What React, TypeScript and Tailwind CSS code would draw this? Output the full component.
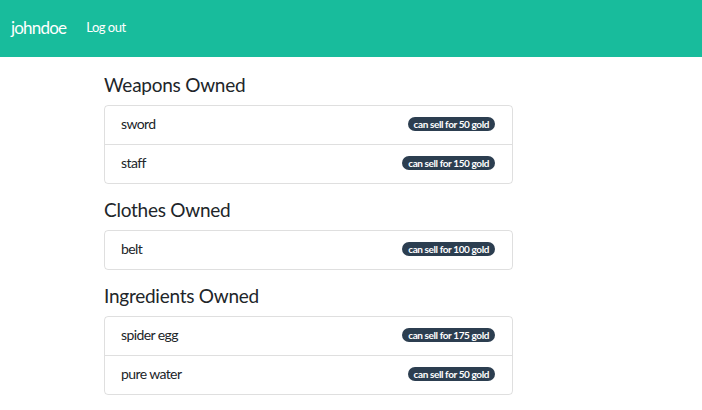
import React from 'react';

interface Item {
  name: string;
  price: number;
}

const sections: { title: string; items: Item[] }[] = [
  {
    title: 'Weapons Owned',
    items: [
      { name: 'sword', price: 50 },
      { name: 'staff', price: 150 },
    ],
  },
  {
    title: 'Clothes Owned',
    items: [{ name: 'belt', price: 100 }],
  },
  {
    title: 'Ingredients Owned',
    items: [
      { name: 'spider egg', price: 175 },
      { name: 'pure water', price: 50 },
    ],
  },
];

export default function App() {
  return (
    <div className="min-h-screen bg-white text-[#212529] font-['Lato','Noto_Sans',sans-serif]">
      <nav className="h-[57px] bg-[#18bc9c] flex items-center px-[11px] pb-[2px] text-white">
        <span className="text-[17px] tracking-[-0.8px]">johndoe</span>
        <span className="ml-[20px] text-[13px] tracking-[-0.5px]">Log out</span>
      </nav>

      <div className="w-[409px] ml-[104px] pt-[2px]">
        {sections.map((section) => (
          <div key={section.title}>
            <h4 className="mt-[14px] mb-[8px] text-[19px] leading-[24px] tracking-[-0.25px]">
              {section.title}
            </h4>
            <ul className="border border-[rgba(0,0,0,0.125)] rounded-[4px]">
              {section.items.map((item, i) => (
                <li
                  key={item.name}
                  className={`flex items-center justify-between pl-[16px] pr-[17px] pb-[3px] h-[38px] text-[14px] tracking-[-0.6px] ${
                    i > 0 ? 'border-t border-[rgba(0,0,0,0.125)] h-[39px]' : ''
                  }`}
                >
                  <span>{item.name}</span>
                  <span className="bg-[#2c3e50] text-white text-[10px] font-bold leading-none tracking-[-0.4px] px-[6px] py-[2px] rounded-full">
                    can sell for {item.price} gold
                  </span>
                </li>
              ))}
            </ul>
          </div>
        ))}
      </div>
    </div>
  );
}
